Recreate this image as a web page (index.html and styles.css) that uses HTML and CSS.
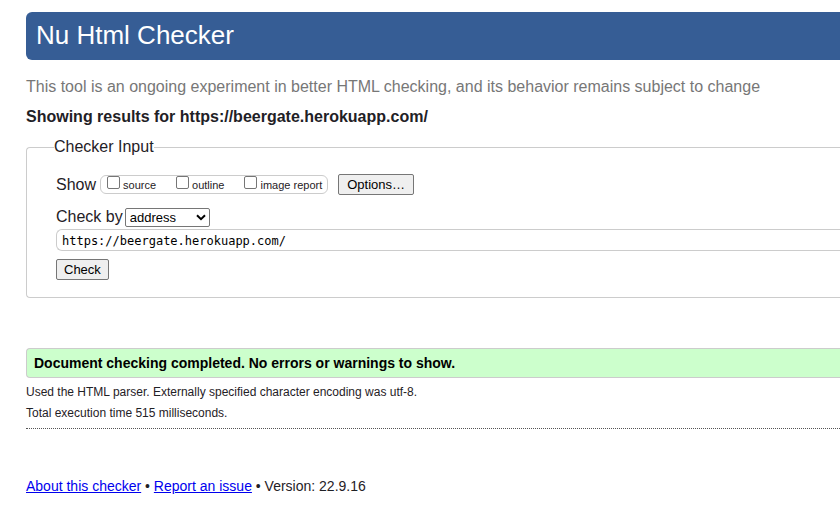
FILE: index.html
```html
<!DOCTYPE html>
<html lang="en">
<head>
<meta charset="utf-8">
<title>Nu Html Checker</title>
<link rel="stylesheet" href="styles.css">
</head>
<body>
<header class="banner"><h1>Nu Html Checker</h1></header>
<main>
  <p class="tagline">This tool is an ongoing experiment in better HTML checking, and its behavior remains subject to change</p>
  <h2 class="subject">Showing results for https://beergate.herokuapp.com/</h2>
  <form>
    <fieldset class="checker">
      <legend>Checker Input</legend>
      <div class="row show-row">
        <span>Show</span>
        <div class="checks">
          <label><input type="checkbox">source</label>
          <label><input type="checkbox">outline</label>
          <label><input type="checkbox">image report</label>
        </div>
        <button type="button" class="button options">Options…</button>
      </div>
      <div class="row method-row">
        <label for="method">Check by</label>
        <div class="picker">
          <select id="method"><option>address</option><option>file upload</option><option>text input</option></select>
          <svg class="chevron" viewBox="0 0 10 7" aria-hidden="true"><path d="M1 1.2 5 5.2 9 1.2"/></svg>
        </div>
      </div>
      <input class="address" type="text" aria-label="Address" value="https://beergate.herokuapp.com/">
      <button type="button" class="button">Check</button>
    </fieldset>
  </form>
  <section class="results">
    <p class="success">Document checking completed. No errors or warnings to show.</p>
    <p class="detail">Used the HTML parser. Externally specified character encoding was utf-8.</p>
    <p class="detail">Total execution time 515 milliseconds.</p>
  </section>
</main>
<footer class="about"><a href="#about">About this checker</a> • <a href="#issues">Report an issue</a> • Version: 22.9.16</footer>
</body>
</html>
```
FILE: styles.css
```css
* {
  box-sizing: border-box;
}

body {
  margin: 12px 0 0 26px;
  background: #fff;
  color: #1f2126;
  font: 16px/20px "Liberation Sans", Arial, sans-serif;
}

h1, h2, p {
  margin: 0;
}

.banner {
  padding: 7px 10px 9px;
  border-radius: 6px 0 0 6px;
  background: #365d95;
  color: #fff;
}

h1 {
  font-size: 26px;
  font-weight: 400;
  line-height: 32px;
}

.tagline {
  margin-top: 17px;
  color: #777;
}

.subject {
  margin: 10px 0;
  font-size: 16px;
}

.checker {
  margin: 0;
  padding: 17px 0 17px 29px;
  border: 1px solid #ccc;
  border-right: 0;
  border-radius: 4px 0 0 4px;
}

legend {
  margin-left: -2px;
  padding: 0;
}

.row {
  display: flex;
  align-items: center;
}

.show-row {
  gap: 4px;
}

.checks {
  display: flex;
  gap: 20px;
  height: 19px;
  padding: 0 5px 0 6px;
  border: 1px solid #ccc;
  border-radius: 6px;
  font-size: 11px;
  line-height: 18px;
}

.checks label {
  display: flex;
  align-items: flex-start;
}

.checks input {
  appearance: none;
  width: 13px;
  height: 13px;
  margin: 0 3px 0 0;
  border: 1px solid #767676;
  border-radius: 2px;
  background: #fff;
}

.button {
  display: block;
  height: 21px;
  padding: 0 7px;
  border: 1px solid #767676;
  border-radius: 2px;
  background: #efefef;
  color: #000;
  font: 13px/19px "Liberation Sans", Arial, sans-serif;
}

.options {
  margin-left: 6px;
  padding: 0 8px;
}

.method-row {
  gap: 2px;
  margin: 12px 0 2px;
}

.picker {
  position: relative;
}

select {
  appearance: none;
  display: block;
  width: 85px;
  height: 19px;
  padding: 0 4px;
  border: 1px solid #767676;
  border-radius: 2px;
  background: #fff;
  color: #000;
  font: 13px/17px "Liberation Sans", Arial, sans-serif;
}

.chevron {
  position: absolute;
  top: 6px;
  right: 4px;
  width: 10px;
  height: 7px;
  fill: none;
  stroke: #000;
  stroke-width: 2;
  pointer-events: none;
}

.address {
  display: block;
  width: 100%;
  height: 22px;
  margin-bottom: 8px;
  padding: 1px 5px 0;
  border: 1px solid #ccc;
  border-right: 0;
  border-radius: 6px 0 0 6px;
  color: #000;
  font: 12px/20px "DejaVu Sans Mono", monospace;
}

.results {
  margin-top: 50px;
  padding-bottom: 4px;
  border-bottom: 1px dotted #555;
}

.success {
  margin-bottom: 4px;
  padding: 4px 7px;
  border: 1px solid #ccc;
  border-right: 0;
  border-radius: 4px 0 0 4px;
  background: #cfc;
  color: #000;
  font-size: 14px;
  font-weight: 700;
}

.detail {
  font-size: 12px;
  line-height: 21px;
}

.about {
  margin-top: 47px;
  font-size: 14px;
}

a {
  color: #00e;
}
```
